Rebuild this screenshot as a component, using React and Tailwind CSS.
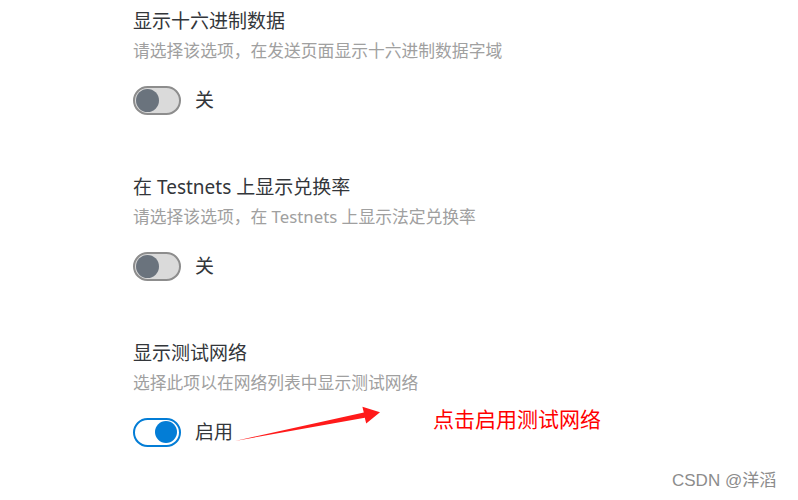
const font = {
  fontFamily: '"Noto Sans", "Noto Sans CJK SC", sans-serif',
};

const Toggle = ({ on }) => {
  if (on) {
    return (
      <div className="flex h-[29px] w-[48px] shrink-0 items-center justify-end rounded-full border-2 border-[#037dd6] bg-white pr-[2px]">
        <div className="h-[22px] w-[22px] rounded-full bg-[#037dd6]" />
      </div>
    );
  }
  return (
    <div className="flex h-[29px] w-[48px] shrink-0 items-center rounded-full border-2 border-[#8d8d8d] bg-[#dadada] pl-[1px]">
      <div className="h-[23px] w-[23px] rounded-full bg-[#6a737d]" />
    </div>
  );
};

const Setting = ({ title, desc, on, label }) => (
  <div className="flex flex-col">
    <div className="h-[24px] text-[19px] leading-[24px] text-[#33363a]">{title}</div>
    <div className="mt-[8px] h-[20px] text-[16.8px] leading-[20px] text-[#a0a0a0]">{desc}</div>
    <div className="mt-[24px] flex h-[30px] items-center gap-[14px]">
      <Toggle on={on} />
      <span className="text-[19px] leading-[24px] text-[#33363a]">{label}</span>
    </div>
  </div>
);

export default function App() {
  return (
    <div className="relative h-[500px] w-[798px] overflow-hidden bg-white" style={font}>
      {/* settings list */}
      <div className="flex flex-col gap-[60px] pl-[133px] pt-[9px]">
        <Setting
          title="显示十六进制数据"
          desc="请选择该选项，在发送页面显示十六进制数据字域"
          label="关"
        />
        <Setting
          title="在 Testnets 上显示兑换率"
          desc="请选择该选项，在 Testnets 上显示法定兑换率"
          label="关"
        />
        <Setting
          title="显示测试网络"
          desc="选择此项以在网络列表中显示测试网络"
          label="启用"
          on
        />
      </div>

      {/* annotation arrow */}
      <svg className="absolute left-0 top-0" width="798" height="500">
        <polygon
          points="235,441 363.8,412.4 362.4,406.8 380,412.2 366.2,423.4 364.8,417.8"
          fill="#ff1a1a"
        />
      </svg>
      <div className="absolute left-[433px] top-[405px] text-[21px] leading-[28px] text-[#ff0000]">
        点击启用测试网络
      </div>

      {/* watermark */}
      <div
        className="absolute left-[672px] top-[470px] text-[17px] leading-[22px] text-[#8c8c8c]"
        style={{ fontFamily: '"Liberation Sans", "Noto Sans CJK SC", sans-serif' }}
      >
        CSDN @洋滔
      </div>
    </div>
  );
}
